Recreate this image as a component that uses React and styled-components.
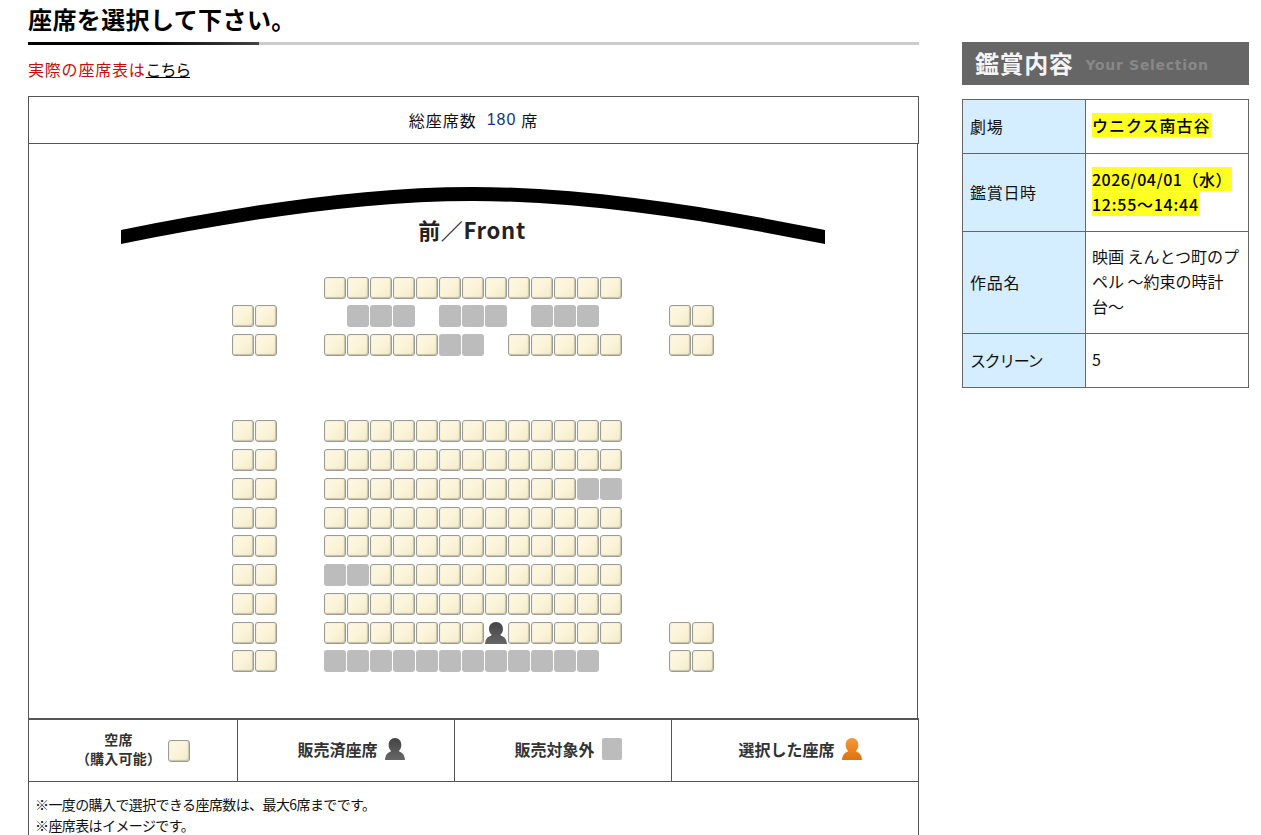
import React from 'react'
import styled, { createGlobalStyle } from 'styled-components'

const GlobalStyle = createGlobalStyle`
  html, body {
    margin: 0;
    padding: 0;
    height: 100%;
    overflow: hidden;
    background: #fff;
    color: #111;
    font-family: "Noto Sans CJK JP", "Liberation Sans", sans-serif;
    font-size: 16px;
  }
  * { box-sizing: border-box; }
`

const Page = styled.div`
  display: flex;
  align-items: flex-start;
  padding-left: 28px;
  gap: 43px;
`

const Main = styled.main`
  width: 891px;
  flex: none;
`

const Title = styled.h1`
  margin: 0;
  height: 45px;
  padding-top: 1px;
  font-size: 24px;
  line-height: 36px;
  font-weight: 700;
  letter-spacing: 0.4px;
  color: #000;
  background:
    linear-gradient(90deg, #000, #000 50%, #444) no-repeat 0 100% / 231px 3px,
    linear-gradient(#ccc, #ccc) no-repeat 0 100% / 100% 3px;
`

const Notice = styled.p`
  margin: 0;
  height: 51px;
  padding-top: 12px;
  line-height: 24px;
  color: #c41010;
  letter-spacing: 0.8px;
`

const NoticeLink = styled.a`
  color: #000;
  text-decoration: underline;
  letter-spacing: -1.2px;
`

const TotalBar = styled.div`
  height: 48px;
  border: 1px solid #555;
  display: flex;
  align-items: center;
  justify-content: center;
  gap: 10px;
  line-height: 48px;
  letter-spacing: 1px;
`

const TotalNum = styled.span`
  color: #12357a;
  font-family: "Liberation Sans", sans-serif;
  letter-spacing: 1px;
  margin-right: -5px;
`

const MapBox = styled.div`
  width: 890px;
  height: 575px;
  border: 1px solid #555;
  border-top: 0;
  padding-top: 43px;
  display: flex;
  flex-direction: column;
  align-items: center;
`

const Stage = styled.div`
  width: 704px;
  height: 57px;
  display: grid;
  justify-items: center;
  margin-bottom: 32.6px;
`

const StageArc = styled.svg`
  grid-area: 1 / 1;
  display: block;
`

const StageLabel = styled.div`
  grid-area: 1 / 1;
  align-self: end;
  font-size: 22px;
  line-height: 28px;
  font-weight: 700;
  color: #222;
  margin: 0 2px 1px 0;
  letter-spacing: 0.7px;
`

const SeatGrid = styled.div`
  display: grid;
  grid-template-columns: repeat(21, 23px);
  grid-auto-rows: 28.75px;
  width: 483px;
`

const SeatBase = styled.div`
  width: 22px;
  height: 22px;
  border-radius: 3px;
`

const OpenSeat = styled(SeatBase)`
  border: 1px solid #9b9b95;
  background: linear-gradient(135deg, #fdf8e4 0%, #fbf4d9 50%, #f3eac9 100%);
  box-shadow: inset -1px -1px 1px #c6c0a9, inset 1px 1px 1px #f4f0e0;
`

const ClosedSeat = styled(SeatBase)`
  background: #bcbcbc;
`

const LegendClosed = styled(ClosedSeat)`
  width: 20px;
  border-radius: 2px;
`

const PersonIcon = styled.svg`
  display: block;
  width: ${p => p.$w || 22}px;
  height: 22px;
`

const Person = ({ top, bottom, id, w }) => (
  <PersonIcon viewBox="0 0 22 22" $w={w} preserveAspectRatio="none">
    <defs>
      <linearGradient id={id} x1="0" y1="0" x2="0" y2="1">
        <stop offset="0" stopColor={top} />
        <stop offset="1" stopColor={bottom} />
      </linearGradient>
    </defs>
    <path
      fill={`url(#${id})`}
      d="M11 0C6.8 0 4 3 4 7c0 2.4 1 4.2 2.4 5.4v1C3 14.6.6 16 0 22h22c-.6-6-3-7.4-6.4-8.6v-1C17 11.2 18 9.4 18 7 18 3 15.2 0 11 0z"
    />
  </PersonIcon>
)

const Legend = styled.div`
  display: grid;
  grid-template-columns: 208px 217px 217px 1fr;
  height: 64px;
  border: 1px solid #555;
  border-top-width: 2px;
  margin-top: -1px;
`

const LegendCell = styled.div`
  display: flex;
  align-items: center;
  justify-content: center;
  gap: 7px;
  padding: 0 0 4px 10px;
  font-size: 16px;
  font-weight: 700;
  color: #333;
  & + & { border-left: 1px solid #555; }
  &:first-child { padding: 0; }
`

const LegendStack = styled.div`
  font-size: 14px;
  line-height: 19px;
  text-align: center;
  letter-spacing: 0.2px;
  margin-bottom: 3px;
`

const Notes = styled.div`
  border: 1px solid #555;
  border-top: 0;
  padding: 12px 6px;
  font-size: 14px;
  line-height: 21px;
  letter-spacing: -0.6px;
`

const Side = styled.aside`
  width: 287px;
  flex: none;
  padding-top: 42px;
`

const SideHead = styled.div`
  height: 43px;
  background: #666;
  display: flex;
  align-items: center;
  padding-left: 13px;
  gap: 12px;
`

const SideTitle = styled.span`
  color: #f4f4f4;
  font-size: 24px;
  font-weight: 700;
  line-height: 1;
  letter-spacing: 0.6px;
  margin-top: -2px;
`

const SideSub = styled.span`
  color: #888;
  font-family: "DejaVu Sans", sans-serif;
  font-size: 14px;
  font-weight: 700;
  letter-spacing: 0.7px;
  padding-top: 2px;
`

const InfoTable = styled.table`
  width: 287px;
  margin-top: 14px;
  border-collapse: collapse;
  table-layout: fixed;
`

const InfoLabel = styled.th`
  width: 123px;
  padding: 0 7px 2px;
  background: #d5eeff;
  border: 1px solid #666;
  font-weight: 400;
  text-align: left;
  letter-spacing: ${p => p.$ls || '0.7px'};
`

const InfoValue = styled.td`
  padding: 0 6px 2px;
  border: 1px solid #666;
  line-height: 25px;
`

const InfoRow = styled.tr`
  height: ${p => p.$h}px;
`

const Mark = styled.mark`
  background: #ffff22;
  color: #000;
  font-weight: 500;
  letter-spacing: ${p => p.$ls}px;
`

const row = (left, main, right) => left + '..' + main + '..' + right

const rows = [
  row('..', 'aaaaaaaaaaaaa', '..'),
  row('aa', '.xxx.xxx.xxx.', 'aa'),
  row('aa', 'aaaaaxx.aaaaa', 'aa'),
  row('..', '.............', '..'),
  row('..', '.............', '..'),
  row('aa', 'aaaaaaaaaaaaa', '..'),
  row('aa', 'aaaaaaaaaaaaa', '..'),
  row('aa', 'aaaaaaaaaaaxx', '..'),
  row('aa', 'aaaaaaaaaaaaa', '..'),
  row('aa', 'aaaaaaaaaaaaa', '..'),
  row('aa', 'xxaaaaaaaaaaa', '..'),
  row('aa', 'aaaaaaaaaaaaa', '..'),
  row('aa', 'aaaaaaasaaaaa', 'aa'),
  row('aa', 'xxxxxxxxxxxx.', 'aa'),
]

const Seat = ({ kind, id }) => {
  if (kind === 'a') return <OpenSeat />
  if (kind === 'x') return <ClosedSeat />
  if (kind === 's') return <Person id={id} top="#444" bottom="#666" />
  return <div />
}

const App = () => {
  return (
    <Page>
      <GlobalStyle />
      <Main>
        <Title>座席を選択して下さい。</Title>
        <Notice>実際の座席表は<NoticeLink href="#">こちら</NoticeLink></Notice>

        <TotalBar>
          <span>総座席数</span>
          <TotalNum>180</TotalNum>
          <span>席</span>
        </TotalBar>

        <MapBox>
          <Stage>
            <StageArc width="704" height="57" viewBox="0 0 704 57">
              <path d="M0 43 C120 19 240 0 352 0 C464 0 584 19 704 43 L704 57 C584 33 464 14 352 14 C240 14 120 33 0 57 Z" fill="#000" />
            </StageArc>
            <StageLabel>前／Front</StageLabel>
          </Stage>

          <SeatGrid>
            {rows.map((r, y) =>
              r.split('').map((c, x) => <Seat key={`${y}-${x}`} kind={c} id={`sold-${y}-${x}`} />)
            )}
          </SeatGrid>
        </MapBox>

        <Legend>
          <LegendCell>
            <LegendStack>空席<br />（購入可能）</LegendStack>
            <OpenSeat />
          </LegendCell>
          <LegendCell>
            販売済座席
            <Person id="legend-sold" w={20} top="#444" bottom="#666" />
          </LegendCell>
          <LegendCell>
            販売対象外
            <LegendClosed />
          </LegendCell>
          <LegendCell>
            選択した座席
            <Person id="legend-mine" w={20} top="#f39a3a" bottom="#e0720c" />
          </LegendCell>
        </Legend>

        <Notes>
          ※一度の購入で選択できる座席数は、最大6席までです。<br />
          ※座席表はイメージです。
        </Notes>
      </Main>

      <Side>
        <SideHead>
          <SideTitle>鑑賞内容</SideTitle>
          <SideSub>Your Selection</SideSub>
        </SideHead>
        <InfoTable>
          <tbody>
            <InfoRow $h={54}>
              <InfoLabel>劇場</InfoLabel>
              <InfoValue><Mark $ls={1}>ウニクス南古谷</Mark></InfoValue>
            </InfoRow>
            <InfoRow $h={78}>
              <InfoLabel>鑑賞日時</InfoLabel>
              <InfoValue><Mark $ls={0.5}>2026/04/01（水）</Mark><br /><Mark $ls={0.75}>12:55～14:44</Mark></InfoValue>
            </InfoRow>
            <InfoRow $h={102}>
              <InfoLabel>作品名</InfoLabel>
              <InfoValue>映画 えんとつ町のプペル ～約束の時計<br />台～</InfoValue>
            </InfoRow>
            <InfoRow $h={54}>
              <InfoLabel $ls="-1.4px">スクリーン</InfoLabel>
              <InfoValue>5</InfoValue>
            </InfoRow>
          </tbody>
        </InfoTable>
      </Side>
    </Page>
  )
}

export default App
